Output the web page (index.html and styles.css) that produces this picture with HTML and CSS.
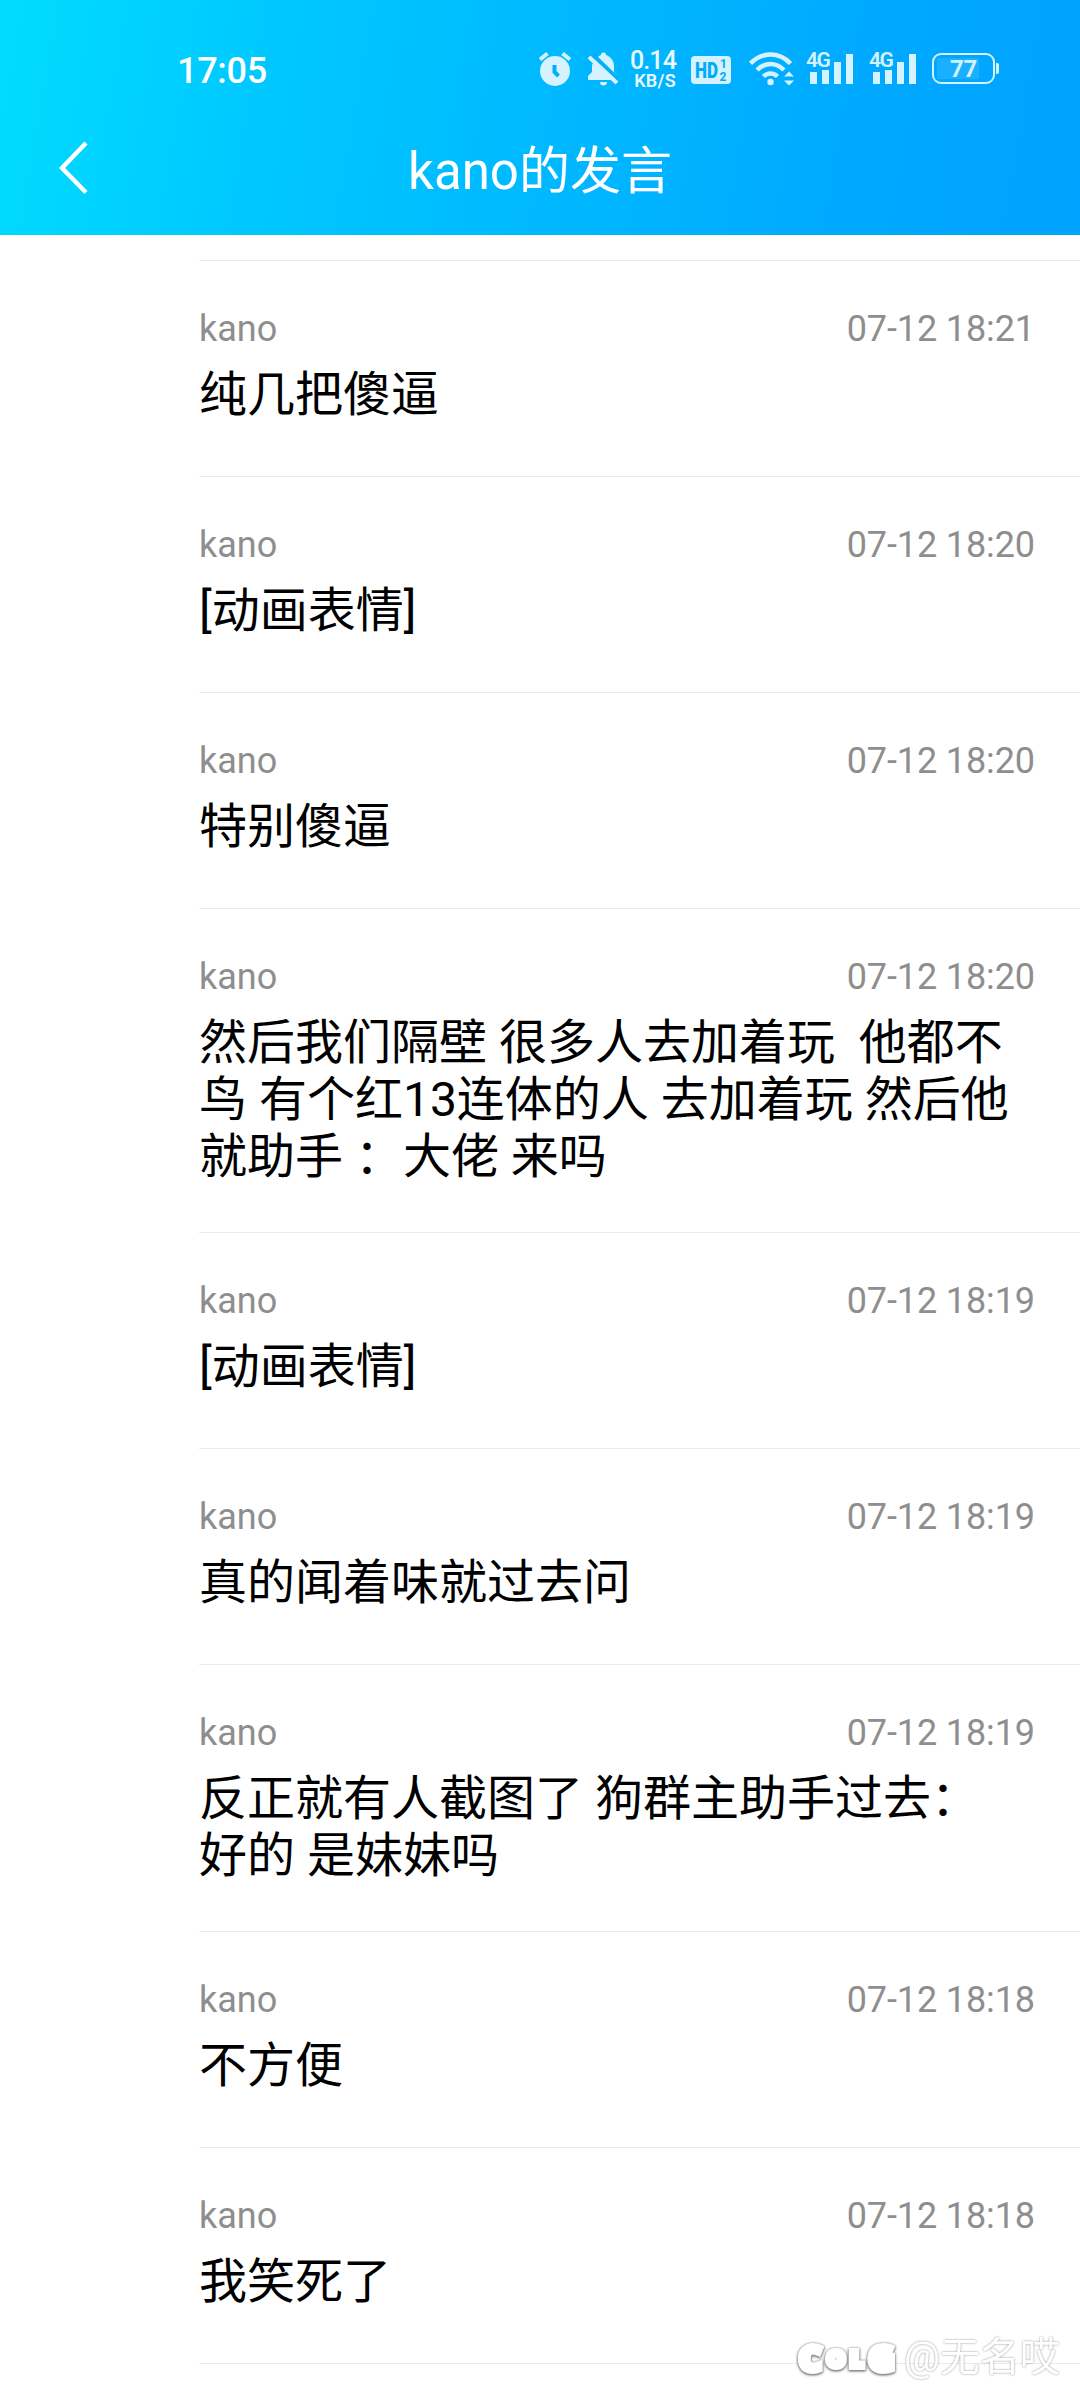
FILE: index.html
```html
<!DOCTYPE html>
<html lang="zh-CN">
<head>
<meta charset="utf-8">
<title>kano的发言</title>
<link rel="stylesheet" href="styles.css">
</head>
<body>
<header class="header">
  <div class="status">
    <span class="clock">17:05</span>
    <div class="indicators">
      <svg class="alarm" width="32" height="36" viewBox="0 0 32 36"><circle cx="16" cy="20" r="15" fill="currentColor"/><path d="M1 8.500 8.500 2.500M31 8.500 23.500 2.500" stroke="currentColor" stroke-width="4"/><path d="M15.500 14v7l4 4" fill="none" stroke="#00aeff" stroke-width="4"/></svg>
      <svg class="bell" width="32" height="36" viewBox="0 0 32 36"><path d="M7 11C9 7 11 5 14 4a2.500 2.500 0 0 1 5 0c5 2 8 6 8 11v6l4 5v3H1v-4l4-4v-6c0-2 1-3 2-4Z" fill="currentColor"/><path d="M13 31h7a3.500 3.500 0 0 1-7 0" fill="currentColor"/><path d="m5 3 27 26" stroke="#00b0ff" stroke-width="4"/><path d="m2 6 28 26" stroke="currentColor" stroke-width="4"/></svg>
      <div class="speed"><span class="rate">0.14</span><span class="unit">KB/S</span></div>
      <svg class="hd" width="40" height="28" viewBox="0 0 40 28"><rect width="40" height="28" rx="4" fill="currentColor"/><g fill="#00aaff"><text class="hd-label" x="4" y="22" textLength="23" lengthAdjust="spacingAndGlyphs">HD</text><text class="hd-sim" x="29" y="12">1</text><text class="hd-sim" x="28.500" y="25">2</text></g></svg>
      <svg class="wifi" width="46" height="36" viewBox="0 0 46 36"><g fill="none" stroke="currentColor" stroke-width="4.500"><path d="M1.500 12.500C13 .5 30 .5 41.500 12.500"/><path d="M8 19c8-8 19-8 27 0"/><path d="M14.500 25.500c4-4 10-4 14 0"/></g><circle cx="21.500" cy="31" r="3.200" fill="currentColor"/><path d="m35 25.500 5-5 5 5ZM35 29.500h10l-5 5Z" fill="currentColor"/></svg>
      <div class="signal"><span>4G</span><svg width="46" height="36" viewBox="0 0 46 36"><path d="M3 21h7v12H3ZM15 19h7v14h-7ZM27 11h7v22h-7ZM39 3h7v30h-7Z" fill="currentColor"/></svg></div>
      <div class="signal second"><span>4G</span><svg width="46" height="36" viewBox="0 0 46 36"><path d="M3 21h7v12H3ZM15 19h7v14h-7ZM27 11h7v22h-7ZM39 3h7v30h-7Z" fill="currentColor"/></svg></div>
      <div class="battery"><span>77</span></div><b class="nub"></b>
    </div>
  </div>
  <nav class="bar">
    <svg class="back" width="32" height="56" viewBox="0 0 32 56"><path d="M28 3 4 28l24 24.500" fill="none" stroke="currentColor" stroke-width="4.500"/></svg>
    <h1>kano的发言</h1>
  </nav>
</header>
<main class="list">
  <article class="item"><div class="meta"><span>kano</span><time>07-12 18:21</time></div><p>纯几把傻逼</p></article>
  <article class="item"><div class="meta"><span>kano</span><time>07-12 18:20</time></div><p>[动画表情]</p></article>
  <article class="item"><div class="meta"><span>kano</span><time>07-12 18:20</time></div><p>特别傻逼</p></article>
  <article class="item"><div class="meta"><span>kano</span><time>07-12 18:20</time></div><p>然后我们隔壁 很多人去加着玩  他都不<br>鸟 有个红13连体的人 去加着玩 然后他<br>就助手 ：大佬 来吗</p></article>
  <article class="item"><div class="meta"><span>kano</span><time>07-12 18:19</time></div><p>[动画表情]</p></article>
  <article class="item"><div class="meta"><span>kano</span><time>07-12 18:19</time></div><p>真的闻着味就过去问</p></article>
  <article class="item"><div class="meta"><span>kano</span><time>07-12 18:19</time></div><p>反正就有人截图了 狗群主助手过去：<br>好的 是妹妹吗</p></article>
  <article class="item"><div class="meta"><span>kano</span><time>07-12 18:18</time></div><p>不方便</p></article>
  <article class="item"><div class="meta"><span>kano</span><time>07-12 18:18</time></div><p>我笑死了</p></article>
  <div class="item end"></div>
</main>
<div class="watermark"><span class="logo"><b>C</b><b class="small">O</b><b class="small">L</b><b>G</b></span><span class="author">@无名哎</span></div>
</body>
</html>
```

FILE: styles.css
```css
* { box-sizing: border-box; }
body {
  margin: 0;
  width: 1080px;
  height: 2400px;
  overflow: hidden;
  position: relative;
  background: #fff;
  color: #000;
  font-family: Roboto, "Noto Sans CJK SC", sans-serif;
}
.header {
  height: 235px;
  color: #fff;
  background: linear-gradient(100deg, #00dcff 0%, #00c7ff 26%, #00b8ff 52%, #00a8ff 80%, #00a3ff 100%);
}
.status { height: 101px; padding: 51px 81px 0 177px; display: flex; justify-content: space-between; }
.clock { font-size: 36px; line-height: 40px; font-weight: 500; letter-spacing: -.3px; }
.indicators { height: 36px; display: flex; align-items: flex-start; color: #d4f3ff; }
.alarm { margin-right: 16px; }
.bell { margin-right: 12px; }
.speed { width: 45px; margin-right: 15px; display: flex; flex-direction: column; align-items: flex-end; color: #e8f9ff; }
.rate { font-size: 25px; line-height: 20px; font-weight: 500; letter-spacing: -.9px; }
.unit { font-size: 18px; line-height: 20px; font-weight: 600; letter-spacing: .3px; }
.hd { margin: 5px 18px 0 0; }
.hd-label { font: 900 22px Roboto, sans-serif; }
.hd-sim { font: 700 12px Roboto, sans-serif; }
.wifi { margin-right: 12px; }
.signal { position: relative; width: 46px; height: 36px; margin-right: 17px; }
.signal span { position: absolute; left: -1px; top: 0; font-size: 21px; line-height: 19px; font-weight: 600; letter-spacing: -1.5px; }
.signal.second { margin-right: 16px; }
.battery { width: 63px; height: 31px; margin-top: 2px; padding: 3px; border: 2px solid currentColor; border-radius: 9px; }
.battery span { display: block; width: 42px; height: 21px; padding-left: 13px; font-size: 24px; line-height: 22px; font-weight: 700; letter-spacing: -.3px; background: rgba(255, 255, 255, .1); }
.nub { width: 3px; height: 11px; margin: 12px 0 0 1px; border-radius: 0 2px 2px 0; background: currentColor; }
.bar { height: 134px; padding: 0 58px; display: grid; grid-template-columns: 32px 1fr 32px; align-items: center; }
h1 { margin: 8px 0 0; text-align: center; font-size: 51px; line-height: 60px; font-weight: 400; }
.list { padding: 25px 0 0 199px; }
.item { min-height: 216px; padding: 47px 45px 0 0; border-top: 1px solid #ebebeb; }
.item:has(br) { padding-bottom: 47px; }
.meta { display: flex; justify-content: space-between; font-size: 36px; line-height: 42px; color: #8e8e8e; }
.meta time { letter-spacing: -.1px; }
p { margin: 16px 0 0; font-size: 48px; line-height: 57px; white-space: pre; }
.item.end { min-height: 1px; padding: 0; }
.watermark { position: absolute; left: 799px; top: 2328px; height: 60px; display: flex; align-items: center; color: #fff; }
.logo { width: 105px; display: flex; align-items: center; gap: 5px; font: 700 35px/40px "Open Sans", sans-serif; -webkit-text-stroke: 6px #fff; filter: drop-shadow(0 1px 1px #777) drop-shadow(0 0 1px #999); }
.logo b.small { font-size: 23px; }
.author { font-size: 40px; line-height: 50px; filter: drop-shadow(0 0 1px #999); }
```
